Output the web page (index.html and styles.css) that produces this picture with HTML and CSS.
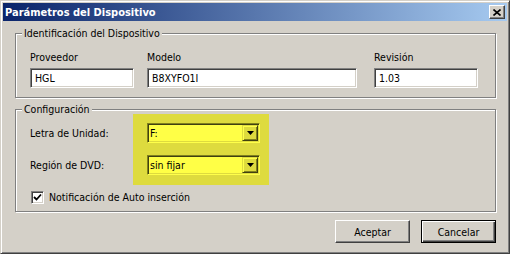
FILE: index.html
```html
<!DOCTYPE html>
<html>
	<head>
		<title>Parámetros del Dispositivo</title>
		<link rel="stylesheet" href="styles.css">
	</head>
	<body>
		<div class="window">
			<div class="titlebar">
				<span class="title">Parámetros del Dispositivo</span>
				<button class="close"><svg width="8" height="7" viewBox="0 0 8 7"><path d="M0.5 0.5 L7.5 6.5 M7.5 0.5 L0.5 6.5" stroke="#000" stroke-width="1.6"/></svg></button>
			</div>
			<div class="content">
				<fieldset class="group ident">
					<legend>Identificación del Dispositivo</legend>
					<div class="ident-grid">
						<span>Proveedor</span>
						<span>Modelo</span>
						<span>Revisión</span>
						<div class="field short">HGL</div>
						<div class="field long">B8XYFO1I</div>
						<div class="field short">1.03</div>
					</div>
				</fieldset>
				<fieldset class="group config">
					<legend>Configuración</legend>
					<div class="config-rows">
						<div class="config-labels">
							<span>Letra de Unidad:</span>
							<span>Región de DVD:</span>
						</div>
						<div class="highlight">
							<div class="combo">
								<span class="combo-value">F:</span>
								<span class="combo-btn"><svg width="7" height="4" viewBox="0 0 7 4"><polygon points="0,0 7,0 3.5,4" fill="#000"/></svg></span>
							</div>
							<div class="combo">
								<span class="combo-value">sin fijar</span>
								<span class="combo-btn"><svg width="7" height="4" viewBox="0 0 7 4"><polygon points="0,0 7,0 3.5,4" fill="#000"/></svg></span>
							</div>
						</div>
					</div>
					<div class="check-row">
						<span class="checkbox"><svg width="9" height="9" viewBox="0 0 9 9"><path d="M1 4 L3.5 6.5 L8 1.5" fill="none" stroke="#000" stroke-width="1.8"/></svg></span>
						Notificación de Auto inserción
					</div>
				</fieldset>
				<div class="buttons">
					<button class="btn">Aceptar</button>
					<button class="btn default">Cancelar</button>
				</div>
			</div>
		</div>
	</body>
</html>
```

FILE: styles.css
```css
* {
	box-sizing: border-box;
}

body {
	margin: 0;
	font: 10.5px "DejaVu Sans Condensed", "Liberation Sans", Arial, sans-serif;
	color: #000;
	background: #d4d0c8;
}

.window {
	width: 510px;
	height: 254px;
	padding: 2px;
	background: #d4d0c8;
	border: 1px solid;
	border-color: #d4d0c8 #404040 #404040 #d4d0c8;
	box-shadow: inset 1px 1px #fff, inset -1px -1px #808080;
}

.titlebar {
	height: 18px;
	display: flex;
	align-items: center;
	justify-content: space-between;
	padding: 0 2px;
	background: linear-gradient(to right, #0a246a, #a6caf0);
}

.title {
	color: #fff;
	font-weight: bold;
	font-size: 11px;
}

.close {
	width: 16px; height: 14px;
	padding: 0;
	display: flex;
	align-items: center;
	justify-content: center;
	background: #d4d0c8;
	border: 1px solid;
	border-color: #fff #404040 #404040 #fff;
	box-shadow: inset -1px -1px #808080;
}

.content {
	padding: 0 11px 0 12px;
}

.group {
	margin: 6px 0 0;
	border: 1px solid #808080;
	box-shadow: inset 1px 1px #fff, 1px 1px #fff;
	padding: 0 10px 9px 14px;
}

.group legend {
	margin-left: -8px;
	padding: 0 2px;
	line-height: 13px;
	background: #d4d0c8;
}

.ident-grid {
	display: grid;
	grid-template-columns: 117px 227px 104px;
	row-gap: 4px;
	padding-top: 11px;
	line-height: 13px;
}

.field {
	height: 20px;
	padding: 0 4px;
	line-height: 18px;
	background: #fff;
	border: 1px solid;
	border-color: #808080 #fff #fff #808080;
	box-shadow: inset 1px 1px #404040, inset -1px -1px #d4d0c8;
}

.field.short { width: 104px; }
.field.long { width: 210px; }

.config {
	margin-top: 5px;
	padding-bottom: 7px;
}

.config-rows {
	display: flex;
	margin-top: -2px;
}

.config-labels,
.highlight {
	display: flex;
	flex-direction: column;
	gap: 12px;
	padding: 9px 0 10px;
}

.config-labels {
	width: 103px;
}

.config-labels span {
	height: 20px;
	line-height: 20px;
}

.highlight {
	padding: 9px 9px 10px 14px;
	background: #dedb3e;
}

.combo {
	width: 113px; height: 20px;
	display: flex;
	align-items: center;
	justify-content: space-between;
	padding: 1px;
	background: #ffff46;
	border: 1px solid;
	border-color: #80801e #ffff4a #ffff4a #80801e;
	box-shadow: inset 1px 1px #404010, inset -1px -1px #dedb3e;
}

.combo-value {
	padding-left: 1px;
}

.combo-btn {
	width: 16px; height: 16px;
	display: flex;
	align-items: center;
	justify-content: center;
	background: #dedb3e;
	border: 1px solid;
	border-color: #dedb3e #404010 #404010 #dedb3e;
	box-shadow: inset 1px 1px #ffff4a, inset -1px -1px #80801e;
}

.check-row {
	display: flex;
	align-items: center;
	gap: 5px;
	margin-top: 6px;
	padding-left: 1px;
	line-height: 13px;
}

.checkbox {
	width: 13px; height: 13px;
	display: flex;
	align-items: center;
	justify-content: center;
	background: #fff;
	border: 1px solid;
	border-color: #808080 #fff #fff #808080;
	box-shadow: inset 1px 1px #404040, inset -1px -1px #d4d0c8;
}

.buttons {
	display: flex;
	justify-content: flex-end;
	gap: 11px;
	margin-top: 8px;
}

.btn {
	width: 75px; height: 23px;
	padding: 0;
	font: inherit;
	color: #000;
	background: #d4d0c8;
	border: 1px solid;
	border-color: #fff #404040 #404040 #fff;
	box-shadow: inset -1px -1px #808080;
}

.btn.default {
	border-color: #000;
	box-shadow: inset 1px 1px #fff, inset -1px -1px #404040, inset -2px -2px #808080;
}
```
